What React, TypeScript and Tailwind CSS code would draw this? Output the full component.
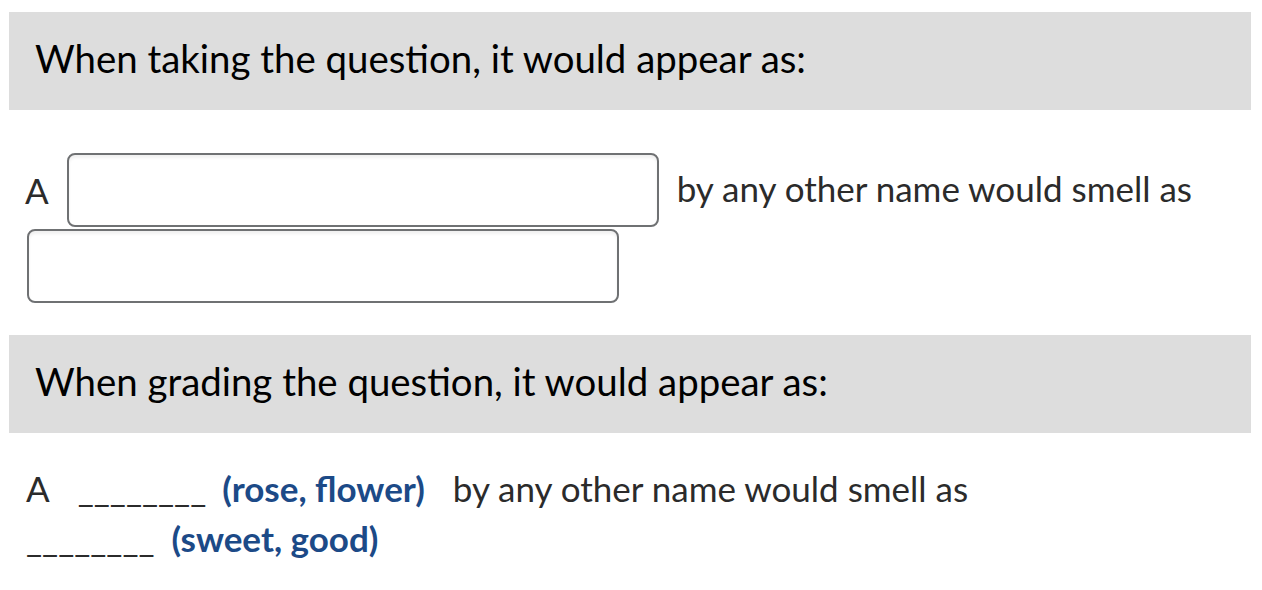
export default function App() {
  const font = { fontFamily: 'Lato, "Noto Sans", sans-serif' };
  return (
    <div className="min-h-[590px] w-[1262px] bg-white pl-[9px] pr-[11px] pt-[12px] text-[#2b2b2b]" style={font}>
      <div className="flex h-[98px] items-center bg-[#dddddd] pb-[4px] pl-[26px] text-[38.4px] text-black">
        When taking the question, it would appear as:
      </div>

      <div className="flex flex-wrap items-center gap-x-[18px] gap-y-[2px] pl-[18px] pt-[43px] text-[35px]">
        <span className="-ml-[2px]">A</span>
        <input
          type="text"
          className="h-[74px] w-[592px] rounded-[8px] border-2 border-[#6f7173] bg-white shadow-[inset_0_3px_3px_rgba(0,0,0,0.06)] outline-none"
        />
        <span className="-mt-[4px]">by any other name would smell as</span>
        <input
          type="text"
          className="h-[74px] w-[592px] rounded-[8px] border-2 border-[#6f7173] bg-white shadow-[inset_0_3px_3px_rgba(0,0,0,0.06)] outline-none"
        />
      </div>

      <div className="mt-[32px] flex h-[98px] items-center bg-[#dddddd] pb-[4px] pl-[26px] text-[38.4px] text-black">
        When grading the question, it would appear as:
      </div>

      <div className="pl-[17px] pt-[30px] text-[35px] leading-[50px]">
        <span>A</span>
        <span className="ml-[28px]">________</span>
        <span className="ml-[16px] font-bold text-[#1c4a87]">(rose, flower)</span>
        <span className="ml-[28px]">by any other name would smell as</span>
        <br />
        <span>________</span>
        <span className="ml-[17px] font-bold text-[#1c4a87]">(sweet, good)</span>
      </div>
    </div>
  );
}
